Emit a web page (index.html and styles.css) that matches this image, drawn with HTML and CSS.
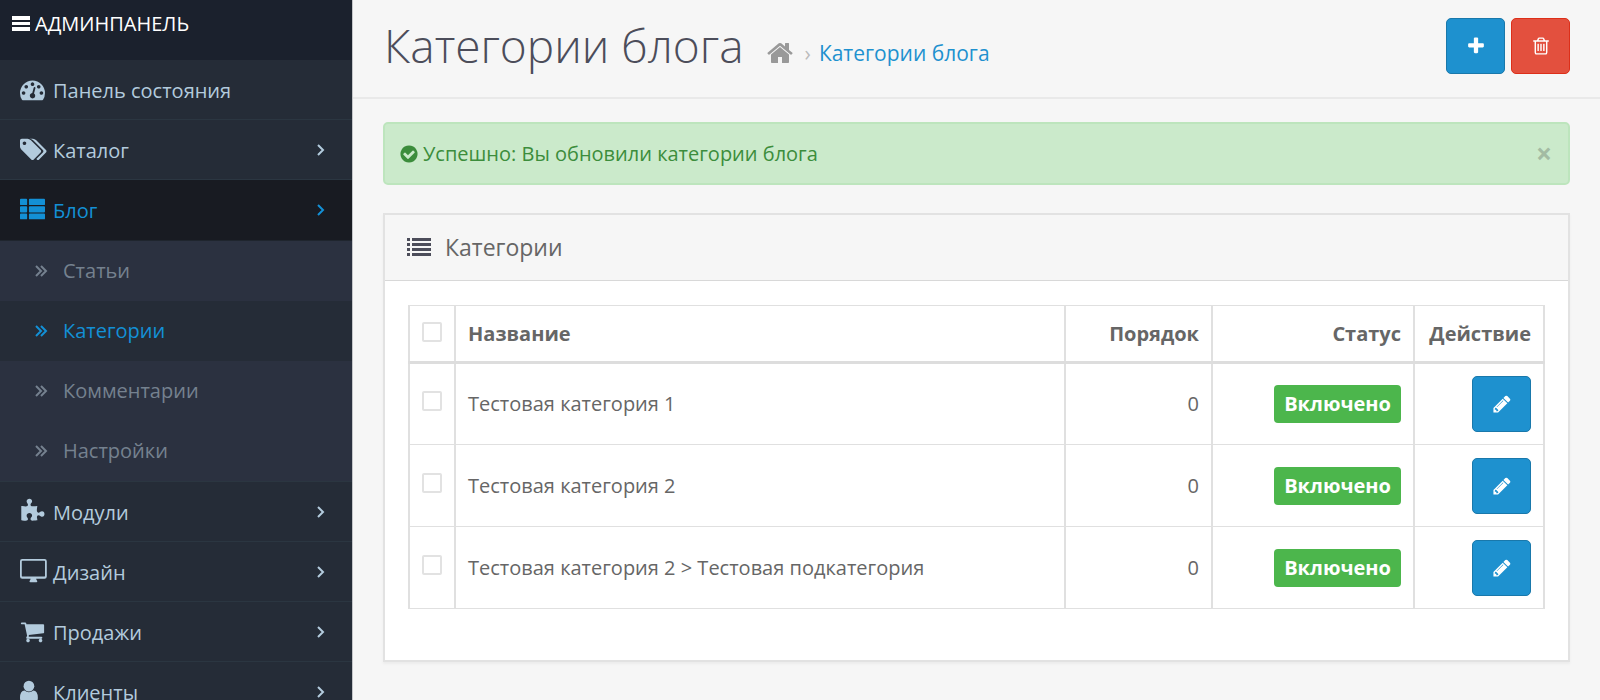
FILE: index.html
```html
<!DOCTYPE html>
<html lang="ru">
<head>
    <meta charset="UTF-8">
    <meta name="viewport" content="width=device-width, initial-scale=1.0">
    <title>Категории блога</title>
    <link rel="stylesheet" href="styles.css">
</head>
<body>
    <!-- Icons -->
    <svg class="sprite" aria-hidden="true">
        <symbol id="i-dashboard" viewBox="0 0 1792 1792"><path d="M384 1152q0-53-37.5-90.5t-90.5-37.5-90.5 37.5-37.5 90.5 37.5 90.5 90.5 37.5 90.5-37.5 37.5-90.5zm192-448q0-53-37.5-90.5t-90.5-37.5-90.5 37.5-37.5 90.5 37.5 90.5 90.5 37.5 90.5-37.5 37.5-90.5zm428 481l101-382q6-26-7.5-48.5t-38.5-29.5-48 6.5-30 39.5l-101 382q-60 5-107 43.5t-63 98.5q-20 77 20 146t117 89 146-20 89-117q16-60-6-117t-72-91zm660-33q0-53-37.5-90.5t-90.5-37.5-90.5 37.5-37.5 90.5 37.5 90.5 90.5 37.5 90.5-37.5 37.5-90.5zm-640-640q0-53-37.5-90.5t-90.5-37.5-90.5 37.5-37.5 90.5 37.5 90.5 90.5 37.5 90.5-37.5 37.5-90.5zm448 192q0-53-37.5-90.5t-90.5-37.5-90.5 37.5-37.5 90.5 37.5 90.5 90.5 37.5 90.5-37.5 37.5-90.5zm320 448q0 261-141 483-19 29-54 29h-1402q-35 0-54-29-141-221-141-483 0-182 71-348t191-286 286-191 348-71 348 71 286 191 191 286 71 348z"/></symbol>
        <symbol id="i-tags" viewBox="0 0 1792 1792"><path d="M448 448q0-53-37.5-90.5t-90.5-37.5-90.5 37.5-37.5 90.5 37.5 90.5 90.5 37.5 90.5-37.5 37.5-90.5zm1067 576q0 53-37 90l-491 492q-39 37-91 37-53 0-90-37l-715-716q-38-37-64.5-101t-26.5-117v-416q0-52 38-90t90-38h416q53 0 117 26.5t102 64.5l715 714q37 39 37 91zm384 0q0 53-37 90l-491 492q-39 37-91 37-36 0-59-14t-53-45l470-470q37-37 37-90 0-52-37-91l-715-714q-38-38-102-64.5t-117-26.5h224q53 0 117 26.5t102 64.5l715 714q37 39 37 91z"/></symbol>
        <symbol id="i-th-list" viewBox="0 0 1792 1792"><path d="M64 128h384q64 0 64 64v320q0 64-64 64h-384q-64 0-64-64v-320q0-64 64-64zm640 0h1024q64 0 64 64v320q0 64-64 64h-1024q-64 0-64-64v-320q0-64 64-64zM64 656h384q64 0 64 64v320q0 64-64 64h-384q-64 0-64-64v-320q0-64 64-64zm640 0h1024q64 0 64 64v320q0 64-64 64h-1024q-64 0-64-64v-320q0-64 64-64zM64 1184h384q64 0 64 64v288q0 64-64 64h-384q-64 0-64-64v-288q0-64 64-64zm640 0h1024q64 0 64 64v288q0 64-64 64h-1024q-64 0-64-64v-288q0-64 64-64z"/></symbol>
        <symbol id="i-puzzle" viewBox="0 0 1792 1792"><path d="M1755 1083q0 81-44.5 135t-123.5 54q-41 0-77.5-17.5t-59-38-56.5-38-71-17.5q-110 0-110 124 0 39 16 115t15 115v5q-22 0-33 1-34 3-97.5 11.5t-115.5 13.5-98 5q-61 0-103-26.5t-42-83.5q0-37 17.5-71t38-56.5 38-59 17.5-77.5q0-79-54-123.5t-135-44.5q-84 0-143 45.5t-59 127.5q0 43 15 83t33.5 64.5 33.5 53 15 50.5q0 45-46 89-37 35-117 35-95 0-245-24-9-2-27.5-4t-27.5-4l-13-2q-1 0-3-1-2 0-2-1v-1024q2 1 17.5 3.5t34 5 21.5 3.5q150 24 245 24 80 0 117-35 46-44 46-89 0-22-15-50.5t-33.5-53-33.5-64.5-15-83q0-82 59-127.5t144-45.5q80 0 134 44.5t54 123.5q0 41-17.5 77.5t-38 59-38 56.5-17.5 71q0 57 42 83.5t103 26.5q64 0 180-15t163-17v2q-1 2-3.5 17.5t-5 34-3.5 21.5q-24 150-24 245 0 80 35 117 44 46 89 46 22 0 50.5-15t53-33.5 64.5-33.5 83-15q82 0 127.5 59t45.5 143z"/></symbol>
        <symbol id="i-desktop" viewBox="0 0 1792 1792"><path fill-rule="evenodd" d="M160 0h1600q160 0 160 160v1088q0 160-160 160h-600q0 60 50 128 30 40 30 64 0 64-64 64h-432q-64 0-64-64 0-24 30-64 50-68 50-128h-600q-160 0-160-160v-1088q0-160 160-160zm0 128q-32 0-32 32v1056q0 32 32 32h1600q32 0 32-32v-1056q0-32-32-32z"/></symbol>
        <symbol id="i-cart" viewBox="0 0 1792 1792"><path d="M704 1536q0 52-38 90t-90 38-90-38-38-90 38-90 90-38 90 38 38 90zm896 0q0 52-38 90t-90 38-90-38-38-90 38-90 90-38 90 38 38 90zm128-1088v512q0 24-16.5 42.5t-40.5 21.5l-1044 122q13 60 13 70 0 16-24 64h920q26 0 45 19t19 45-19 45-45 19h-1024q-26 0-45-19t-19-45q0-11 8-31.5t16-36 21.5-40 15.5-29.5l-177-823h-204q-26 0-45-19t-19-45 19-45 45-19h256q16 0 28.5 6.5t19.5 15.5 13 24.5 8 26 5.5 29.5 4.5 26h1201q26 0 45 19t19 45z"/></symbol>
        <symbol id="i-user" viewBox="0 0 1792 1792"><circle cx="640" cy="512" r="384"/><path d="M330 832q130 120 310 120t310-120q330 30 330 520 0 312-250 312h-780q-250 0-250-312 0-490 330-520z"/></symbol>
        <symbol id="i-angle" viewBox="0 0 10 14"><path class="line" d="M2 2l5 5-5 5"/></symbol>
        <symbol id="i-double" viewBox="0 0 12 12"><path class="line" d="M1 1l5 5-5 5M6 1l5 5-5 5"/></symbol>
        <symbol id="i-home" viewBox="0 0 1792 1792"><path d="M1472 992v480q0 26-19 45t-45 19h-384v-384h-256v384h-384q-26 0-45-19t-19-45v-480q0-1 .5-3t.5-3l575-474 575 474q1 2 1 6zm223-69l-62 74q-8 9-21 11h-3q-13 0-21-7l-692-577-692 577q-12 8-24 7-13-2-21-11l-62-74q-8-10-7-23.5t11-21.5l719-599q32-26 76-26t76 26l244 204v-195q0-14 9-23t23-9h192q14 0 23 9t9 23v408l219 182q10 8 11 21.5t-7 23.5z"/></symbol>
        <symbol id="i-plus" viewBox="0 0 1792 1792"><path d="M1600 736v192q0 40-28 68t-68 28h-416v416q0 40-28 68t-68 28h-192q-40 0-68-28t-28-68v-416h-416q-40 0-68-28t-28-68v-192q0-40 28-68t68-28h416v-416q0-40 28-68t68-28h192q40 0 68 28t28 68v416h416q40 0 68 28t28 68z"/></symbol>
        <symbol id="i-trash" viewBox="0 0 1792 1792"><path d="M704 736v576q0 14-9 23t-23 9h-64q-14 0-23-9t-9-23v-576q0-14 9-23t23-9h64q14 0 23 9t9 23zm256 0v576q0 14-9 23t-23 9h-64q-14 0-23-9t-9-23v-576q0-14 9-23t23-9h64q14 0 23 9t9 23zm256 0v576q0 14-9 23t-23 9h-64q-14 0-23-9t-9-23v-576q0-14 9-23t23-9h64q14 0 23 9t9 23zm128 724v-948h-896v948q0 22 7 40.5t14.5 27 10.5 8.5h832q3 0 10.5-8.5t14.5-27 7-40.5zm-672-1076h448l-48-117q-7-9-17-11h-317q-10 2-17 11zm928 32v64q0 14-9 23t-23 9h-96v948q0 83-47 143.5t-113 60.5h-832q-66 0-113-58.5t-47-141.5v-952h-96q-14 0-23-9t-9-23v-64q0-14 9-23t23-9h309l70-167q15-37 54-63t79-26h320q40 0 79 26t54 63l70 167h309q14 0 23 9t9 23z"/></symbol>
        <symbol id="i-pencil" viewBox="0 0 1792 1792"><path d="M491 1536l91-91-235-235-91 91v107h128v128h107zm523-928q0-22-22-22-10 0-17 7l-542 542q-7 7-7 17 0 22 22 22 10 0 17-7l542-542q7-7 7-17zm-54-192l416 416-832 832h-416v-416zm683 96q0 53-37 90l-166 166-416-416 166-165q36-38 90-38 53 0 91 38l235 234q37 39 37 91z"/></symbol>
        <symbol id="i-check" viewBox="0 0 1792 1792"><path d="M1412 734q0-28-18-46l-91-90q-19-19-45-19t-45 19l-408 407-226-226q-19-19-45-19t-45 19l-91 90q-18 18-18 46 0 27 18 45l362 362q19 19 45 19 27 0 46-19l543-543q18-18 18-45zm252 162q0 209-103 385.5t-279.5 279.5-385.5 103-385.5-103-279.5-279.5-103-385.5 103-385.5 279.5-279.5 385.5-103 385.5 103 279.5 279.5 103 385.5z"/></symbol>
        <symbol id="i-bars" viewBox="0 0 18 18"><path d="M0 1h18v4H0zM0 7h18v3H0zM0 12h18v4H0z"/></symbol>
        <symbol id="i-list" viewBox="0 0 24 20"><path d="M0 1h3v3H0zM5 1h19v3H5zM0 6h3v3H0zM5 6h19v3H5zM0 11h3v3H0zM5 11h19v3H5zM0 16h3v3H0zM5 16h19v3H5z"/></symbol>
    </svg>

    <div class="wrapper">
        <nav class="sidebar">
            <div class="brand"><svg class="icon-bars"><use href="#i-bars"/></svg>АДМИНПАНЕЛЬ</div>
            <ul class="menu">
                <li><a href="#"><svg class="icon"><use href="#i-dashboard"/></svg>Панель состояния</a></li>
                <li><a href="#"><svg class="icon"><use href="#i-tags"/></svg>Каталог<svg class="arrow"><use href="#i-angle"/></svg></a></li>
                <li>
                    <a href="#" class="active"><svg class="icon"><use href="#i-th-list"/></svg>Блог<svg class="arrow"><use href="#i-angle"/></svg></a>
                    <ul class="submenu">
                        <li><a href="#"><svg class="double"><use href="#i-double"/></svg>Статьи</a></li>
                        <li><a href="#" class="current"><svg class="double"><use href="#i-double"/></svg>Категории</a></li>
                        <li><a href="#"><svg class="double"><use href="#i-double"/></svg>Комментарии</a></li>
                        <li><a href="#"><svg class="double"><use href="#i-double"/></svg>Настройки</a></li>
                    </ul>
                </li>
                <li><a href="#"><svg class="icon"><use href="#i-puzzle"/></svg>Модули<svg class="arrow"><use href="#i-angle"/></svg></a></li>
                <li><a href="#"><svg class="icon"><use href="#i-desktop"/></svg>Дизайн<svg class="arrow"><use href="#i-angle"/></svg></a></li>
                <li><a href="#"><svg class="icon"><use href="#i-cart"/></svg>Продажи<svg class="arrow"><use href="#i-angle"/></svg></a></li>
                <li><a href="#"><svg class="icon"><use href="#i-user"/></svg>Клиенты<svg class="arrow"><use href="#i-angle"/></svg></a></li>
            </ul>
        </nav>

        <main class="content">
            <header class="page-header">
                <h1>Категории блога</h1>
                <div class="breadcrumb">
                    <a href="#" class="home" aria-label="Главная"><svg><use href="#i-home"/></svg></a>
                    <span class="sep">›</span>
                    <a href="#">Категории блога</a>
                </div>
                <div class="buttons">
                    <button type="button" class="btn btn-primary" aria-label="Добавить"><svg><use href="#i-plus"/></svg></button>
                    <button type="button" class="btn btn-danger" aria-label="Удалить"><svg><use href="#i-trash"/></svg></button>
                </div>
            </header>

            <div class="alert">
                <svg><use href="#i-check"/></svg>
                <span>Успешно: Вы обновили категории блога</span>
                <button type="button" class="close" aria-label="Закрыть">×</button>
            </div>

            <section class="panel">
                <div class="panel-heading">
                    <svg><use href="#i-list"/></svg>
                    <h2>Категории</h2>
                </div>
                <div class="panel-body">
                    <table class="table">
                        <thead>
                            <tr>
                                <th class="col-check"><input type="checkbox" aria-label="Выбрать все"></th>
                                <th>Название</th>
                                <th class="col-order right">Порядок</th>
                                <th class="col-status right">Статус</th>
                                <th class="col-action right">Действие</th>
                            </tr>
                        </thead>
                        <tbody>
                            <tr>
                                <td class="col-check"><input type="checkbox" aria-label="Тестовая категория 1"></td>
                                <td>Тестовая категория 1</td>
                                <td class="right">0</td>
                                <td class="right"><span class="label">Включено</span></td>
                                <td class="right"><button type="button" class="btn btn-primary" aria-label="Редактировать"><svg><use href="#i-pencil"/></svg></button></td>
                            </tr>
                            <tr>
                                <td class="col-check"><input type="checkbox" aria-label="Тестовая категория 2"></td>
                                <td>Тестовая категория 2</td>
                                <td class="right">0</td>
                                <td class="right"><span class="label">Включено</span></td>
                                <td class="right"><button type="button" class="btn btn-primary" aria-label="Редактировать"><svg><use href="#i-pencil"/></svg></button></td>
                            </tr>
                            <tr>
                                <td class="col-check"><input type="checkbox" aria-label="Тестовая подкатегория"></td>
                                <td>Тестовая категория 2 &gt; Тестовая подкатегория</td>
                                <td class="right">0</td>
                                <td class="right"><span class="label">Включено</span></td>
                                <td class="right"><button type="button" class="btn btn-primary" aria-label="Редактировать"><svg><use href="#i-pencil"/></svg></button></td>
                            </tr>
                        </tbody>
                    </table>
                </div>
            </section>
        </main>
    </div>
</body>
</html>
```

FILE: styles.css
```css
* {
    box-sizing: border-box;
}
body {
    margin: 0;
    font-family: "Open Sans", "Noto Sans", sans-serif;
    font-size: 20px;
    line-height: 28px;
    color: #666;
    background-color: #f6f6f6;
}
ul {
    list-style: none;
    margin: 0;
    padding: 0;
}
a {
    color: #1e91cf;
    text-decoration: none;
}
svg {
    display: block;
    flex: none;
    fill: currentColor;
    overflow: visible;
}
symbol {
    overflow: visible;
}
.line {
    fill: none;
    stroke: currentColor;
    stroke-width: 2;
}
.sprite {
    display: none;
}
.wrapper {
    display: flex;
    height: 100vh;
    overflow: hidden;
}

/* Sidebar */
.sidebar {
    flex: none;
    width: 353px;
    color: #b3cbdd;
    background-color: #252c37;
    border-right: 1px solid #c4c6c9;
}
.brand {
    display: flex;
    align-items: center;
    gap: 5px;
    height: 60px;
    padding: 0 12px 12px;
    color: #fff;
    background-color: #1b212d;
}
.icon-bars {
    width: 18px;
    height: 18px;
}
.menu a {
    display: flex;
    align-items: center;
    height: 60px;
    padding: 2px 26px 0 20px;
    color: inherit;
    border-bottom: 1px solid #2b3641;
}
.menu .active {
    height: 61px;
    color: #1390d6;
    background-color: #181b22;
    border-bottom-color: #1f252e;
}
.icon {
    width: 25px;
    height: 25px;
    margin: 0 8px 3px 0;
}
.arrow {
    width: 10px;
    height: 14px;
    margin: 0 0 2px auto;
}
.submenu {
    background-color: #2b3140;
    border-bottom: 1px solid #2b3641;
}
.submenu a {
    padding: 0 26px 0 35px;
    color: #75818f;
    border-bottom: 0;
}
.submenu .current {
    color: #1390d6;
    background-color: #252c37;
}
.double {
    width: 12px;
    height: 12px;
    margin-right: 16px;
}

/* Content */
.content {
    flex: 1;
    min-width: 0;
}
.page-header {
    display: flex;
    align-items: center;
    height: 99px;
    padding: 0 30px 6px 31px;
    border-bottom: 2px solid #e9e9e9;
}
h1 {
    margin: 0 22px 2px 0;
    font-size: 46px;
    line-height: 60px;
    font-weight: 300;
    color: #4c4d5a;
}
.breadcrumb {
    display: flex;
    align-items: center;
    padding-top: 14px;
    font-size: 21px;
}
.home {
    color: #999;
}
.home svg {
    width: 28px;
    height: 28px;
}
.sep {
    margin: 0 8px 0 11px;
    color: #bbb;
}
.buttons {
    display: flex;
    gap: 6px;
    margin-left: auto;
}
.btn {
    display: inline-flex;
    align-items: center;
    justify-content: center;
    width: 59px;
    height: 56px;
    padding: 0;
    color: #fff;
    border: 1px solid;
    border-radius: 5px;
    vertical-align: middle;
    cursor: pointer;
}
.btn svg {
    width: 20px;
    height: 20px;
}
.btn-primary {
    background-color: #1e91cf;
    border-color: #1978ab;
}
.btn-danger {
    background-color: #e3503e;
    border-color: #dd2f19;
}
.alert {
    display: flex;
    align-items: center;
    gap: 4px;
    height: 63px;
    margin: 23px 30px 28px;
    padding: 0 16px 0 14px;
    color: #3c8d3c;
    background-color: #cbeacb;
    border: 2px solid #bde5bd;
    border-radius: 5px;
}
.alert svg {
    width: 20px;
    height: 20px;
}
.close {
    margin-left: auto;
    padding: 0 0 2px;
    font: bold 28px/28px "Open Sans", sans-serif;
    color: #a3bba3;
    background: none;
    border: 0;
    cursor: pointer;
}
.panel {
    margin: 0 30px;
    background-color: #fff;
    border: 2px solid #e2e2e2;
    box-shadow: 0 2px 2px #ececec;
}
.panel-heading {
    display: flex;
    align-items: center;
    gap: 14px;
    height: 66px;
    padding: 0 22px 2px;
    color: #4c4d5a;
    background-color: #f6f6f6;
    border-bottom: 1px solid #d8d8d8;
}
.panel-heading svg {
    width: 24px;
    height: 20px;
}
h2 {
    margin: 0;
    font-size: 23px;
    line-height: 32px;
    font-weight: 400;
    color: #666;
}
.panel-body {
    padding: 24px 23px 51px;
}
.table {
    width: 100%;
    border-collapse: collapse;
}
.table th,
.table td {
    height: 82px;
    padding: 0 12px;
    text-align: left;
    border: solid #e0e0e0;
    border-width: 1px 2px;
}
.table th {
    height: 57px;
    border-bottom: 3px solid #ddd;
}
.table .right {
    text-align: right;
}
.table .col-check {
    width: 46px;
    padding: 0 0 6px;
    text-align: center;
}
.table th.col-check {
    padding-bottom: 3px;
}
.col-order {
    width: 147px;
}
.col-status {
    width: 202px;
}
.col-action {
    width: 130px;
}
.table input {
    appearance: none;
    display: block;
    width: 20px;
    height: 20px;
    margin: 0 auto;
    background-color: #fff;
    border: 2px solid #e2e2e2;
    border-radius: 2px;
}
.label {
    display: inline-block;
    padding: 5px 10px;
    font-weight: 700;
    color: #fff;
    background-color: #4cb64c;
    border-radius: 4px;
    vertical-align: middle;
}
```
